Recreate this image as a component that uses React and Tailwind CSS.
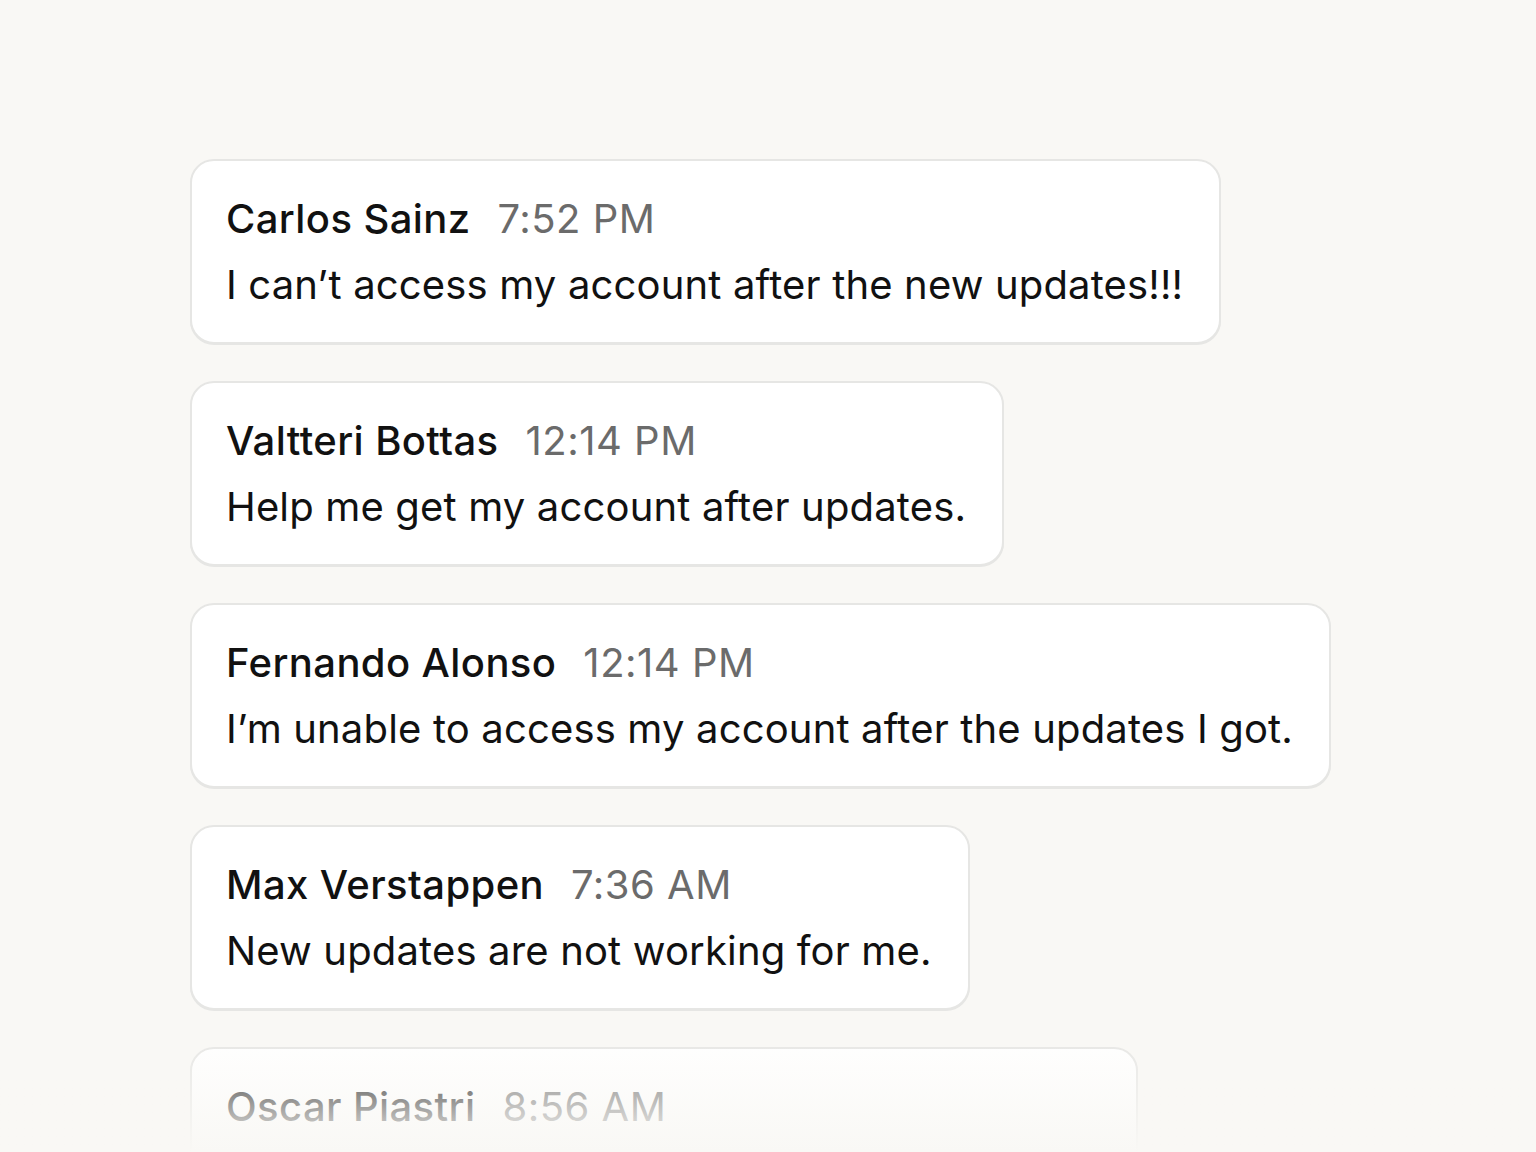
import React from "react";

const messages = [
  { name: "Carlos Sainz", time: "7:52 PM", text: "I can’t access my account after the new updates!!!" },
  { name: "Valtteri Bottas", time: "12:14 PM", text: "Help me get my account after updates." },
  { name: "Fernando Alonso", time: "12:14 PM", text: "I’m unable to access my account after the updates I got." },
  { name: "Max Verstappen", time: "7:36 AM", text: "New updates are not working for me." },
  { name: "Oscar Piastri", time: "8:56 AM", text: "My account got locked after the new updates." },
];

export default function App() {
  return (
    <div
      className="relative h-[1152px] w-[1536px] overflow-hidden bg-[#f9f8f5] text-[#111111]"
      style={{ fontFamily: "Inter, 'Noto Sans', sans-serif" }}
    >
      <div className="flex flex-col items-start gap-[37px] pl-[190px] pt-[159px]">
        {messages.map((m) => (
          <div
            key={m.name}
            className="flex flex-col gap-[18px] rounded-[24px] border-2 border-[#e6e6e4] bg-white pb-[33px] pl-[34px] pr-[36px] pt-[34px] shadow-[0_1px_0_#e6e6e4]"
          >
            <div className="flex items-baseline gap-[27px] text-[40px] leading-[48px]">
              <span className="font-medium tracking-[0.4px]">{m.name}</span>
              <span className="tracking-[0.5px] text-[#6b6b6b]">{m.time}</span>
            </div>
            <div className="text-[40px] leading-[48px] tracking-[0.16px]">{m.text}</div>
          </div>
        ))}
      </div>
      <div className="pointer-events-none absolute bottom-0 left-0 right-0 h-[120px] bg-gradient-to-b from-[#f9f8f5]/0 to-[#f9f8f5]" />
    </div>
  );
}
